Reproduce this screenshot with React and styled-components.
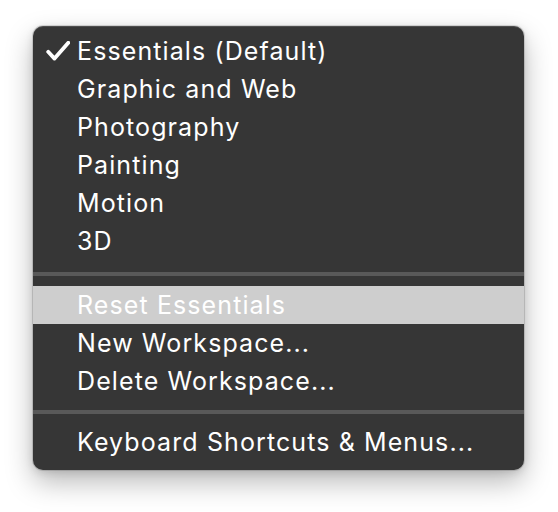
import React from "react";
import styled, { createGlobalStyle } from "styled-components";

const Global = createGlobalStyle`
  html, body { margin: 0; padding: 0; background: #ffffff; }
  body { width: 558px; height: 512px; overflow: hidden; }
`;

const Page = styled.div`
  width: 558px;
  height: 512px;
  box-sizing: border-box;
  padding: 26px 34px 0 33px;
  font-family: Inter, "Helvetica Neue", "Liberation Sans", sans-serif;
`;

const Menu = styled.div`
  width: 491px;
  height: 444px;
  box-sizing: border-box;
  background: #363636;
  border-radius: 10px;
  padding: 6px 0 9px;
  display: flex;
  flex-direction: column;
  box-shadow: 0 0 0 1px rgba(0, 0, 0, 0.12), 0 12px 28px rgba(0, 0, 0, 0.28),
    0 2px 8px rgba(0, 0, 0, 0.12), inset 0 1px 0 rgba(255, 255, 255, 0.12);
`;

const Row = styled.div`
  height: 38px;
  display: flex;
  align-items: center;
  background: ${(p) => (p.$active ? "#cecece" : "transparent")};
  color: #ffffff;
  font-size: 25px;
  letter-spacing: 1.1px;
  white-space: nowrap;
`;

const CheckCell = styled.div`
  width: 44px;
  height: 38px;
  flex: none;
  display: flex;
  align-items: center;
  justify-content: flex-end;
  padding-right: 7px;
  box-sizing: border-box;
`;

const Label = styled.span`
  line-height: 38px;
`;

const Separator = styled.div`
  height: 4px;
  background: #595959;
  margin: ${(p) => p.$top}px 0 ${(p) => p.$bottom}px;
`;

const Check = () => (
  <svg width="24" height="20" viewBox="0 0 24 20">
    <path
      d="M2.2 10.8 L8.5 17.6 L22.3 1.8"
      fill="none"
      stroke="#ffffff"
      strokeWidth="3.8"
      strokeLinecap="round"
      strokeLinejoin="round"
    />
  </svg>
);

const Item = ({ label, checked, active }) => (
  <Row $active={active}>
    <CheckCell>{checked && <Check />}</CheckCell>
    <Label>{label}</Label>
  </Row>
);

export default function App() {
  return (
    <>
      <Global />
      <Page>
        <Menu>
          <Item label="Essentials (Default)" checked />
          <Item label="Graphic and Web" />
          <Item label="Photography" />
          <Item label="Painting" />
          <Item label="Motion" />
          <Item label="3D" />
          <Separator $top={12} $bottom={10} />
          <Item label="Reset Essentials" active />
          <Item label="New Workspace..." />
          <Item label="Delete Workspace..." />
          <Separator $top={10} $bottom={9} />
          <Item label="Keyboard Shortcuts & Menus..." />
        </Menu>
      </Page>
    </>
  );
}
